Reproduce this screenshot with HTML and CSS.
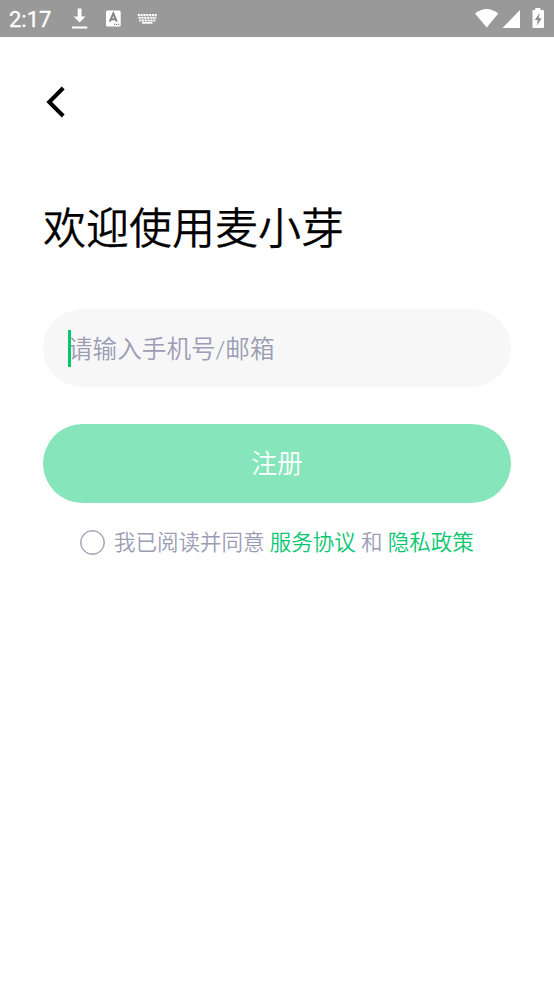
FILE: index.html
```html
<!DOCTYPE html>
<html lang="zh-CN">
<head>
<meta charset="utf-8">
<title>欢迎使用麦小芽</title>
<link rel="stylesheet" href="styles.css">
</head>
<body>
<header class="status">
  <span class="time">2:17</span>
  <svg class="notices" width="90" height="24" viewBox="0 0 90 24" fill="#fff">
    <path d="M7.700 1.500h3.800v8h4L9.600 15.500 3.700 9.500h4zM2 19.500h15.300v2H2z"/>
    <rect x="36" y="3.500" width="14.700" height="16" rx="1.500"/>
    <path d="M39.800 14.700 43.300 6.500l3.500 8.200M41 12.300h4.600" fill="none" stroke="#858585" stroke-width="2"/>
    <path d="M44 17.300h5.500" stroke="#858585" stroke-width="1.300" stroke-dasharray="1.200 .8"/>
    <path d="M67.800 8h19M68.500 10.800h18M69.300 13.500h16.500" stroke="#fff" stroke-width="2" stroke-dasharray="2.100 .7"/>
    <path d="M72 15h10.500v1.700H72z"/>
  </svg>
  <svg class="system" width="72" height="24" viewBox="0 0 72 24" fill="#fff">
    <path d="M1 6.500Q12.500-2.500 24.300 6.500L12.700 20.500z"/>
    <path d="M28.500 21 46 3V21z"/>
    <path d="M61.300 1h5.200v2H69q1 0 1 1v16q0 1-1 1H59.500q-1 0-1-1V4q0-1 1-1h1.800z"/>
    <path d="M65.700 6 60.800 13h3L62.700 18.800l5-7.600h-3z" fill="#8c8c8c"/>
  </svg>
</header>
<main class="page">
  <a class="back" aria-label="返回"><svg width="24" height="36" viewBox="0 0 24 36"><path d="M20.200 5 6.200 19l14 14" fill="none" stroke="#000" stroke-width="4"/></svg></a>
  <h1 class="title">欢迎使用麦小芽</h1>
  <div class="field"><span class="placeholder">请输入手机号/邮箱</span></div>
  <button class="submit">注册</button>
  <div class="terms">
    <span class="check"></span>
    <span class="agreement">我已阅读并同意 <a class="link">服务协议</a> 和 <a class="link">隐私政策</a></span>
  </div>
</main>
</body>
</html>
```
FILE: styles.css
```css
* { box-sizing: border-box; }
body {
  margin: 0;
  background: #fff;
  font-family: Roboto, "Noto Sans CJK SC DemiLight", "Noto Sans CJK SC", sans-serif;
  font-weight: 350;
  color: #000;
}
.status {
  height: 37px;
  background: #999;
  display: flex;
  align-items: flex-start;
  padding: 7px 8px 0 9px;
}
.time {
  width: 61px;
  color: #fff;
  font-size: 22px;
  line-height: 25px;
  font-weight: 400;
  -webkit-text-stroke: .3px #fff;
}
.system { margin-left: auto; }
.page {
  padding: 46px 43px 0;
  display: flex;
  flex-direction: column;
}
.back { display: flex; height: 36px; }
.title {
  margin: 78px 0 0;
  height: 64px;
  line-height: 64px;
  font-size: 43px;
  font-weight: 350;
  -webkit-text-stroke: .25px #000;
  white-space: nowrap;
}
.field {
  margin-top: 48px;
  height: 78px;
  border-radius: 39px;
  background: #f7f7f7;
  display: flex;
  align-items: center;
  padding-left: 25px;
}
.placeholder {
  position: relative;
  height: 37px;
  line-height: 39px;
  font-size: 24.600px;
  color: #9c9cb4;
}
.placeholder::before {
  content: "";
  position: absolute;
  left: 0;
  top: 0;
  width: 3px;
  height: 37px;
  background: #07c670;
}
.submit {
  margin-top: 37px;
  height: 79px;
  padding: 2px 0 0;
  border: 0;
  border-radius: 40px;
  background: #86e5bb;
  color: #fff;
  font: inherit;
  font-size: 25.800px;
  line-height: 77px;
}
.terms {
  margin-top: 23px;
  display: flex;
  align-items: center;
  padding-left: 37px;
  height: 33px;
  gap: 9px;
  font-size: 21.500px;
  color: #9c9cb4;
  white-space: nowrap;
}
.agreement { padding-top: 1px; line-height: 32px; }
.check {
  width: 25px;
  height: 25px;
  border: 1.500px solid #9c9cb4;
  border-radius: 50%;
  box-shadow: inset 0 0 0 .5px #9c9cb4;
}
.link { color: #07c670; }
```
